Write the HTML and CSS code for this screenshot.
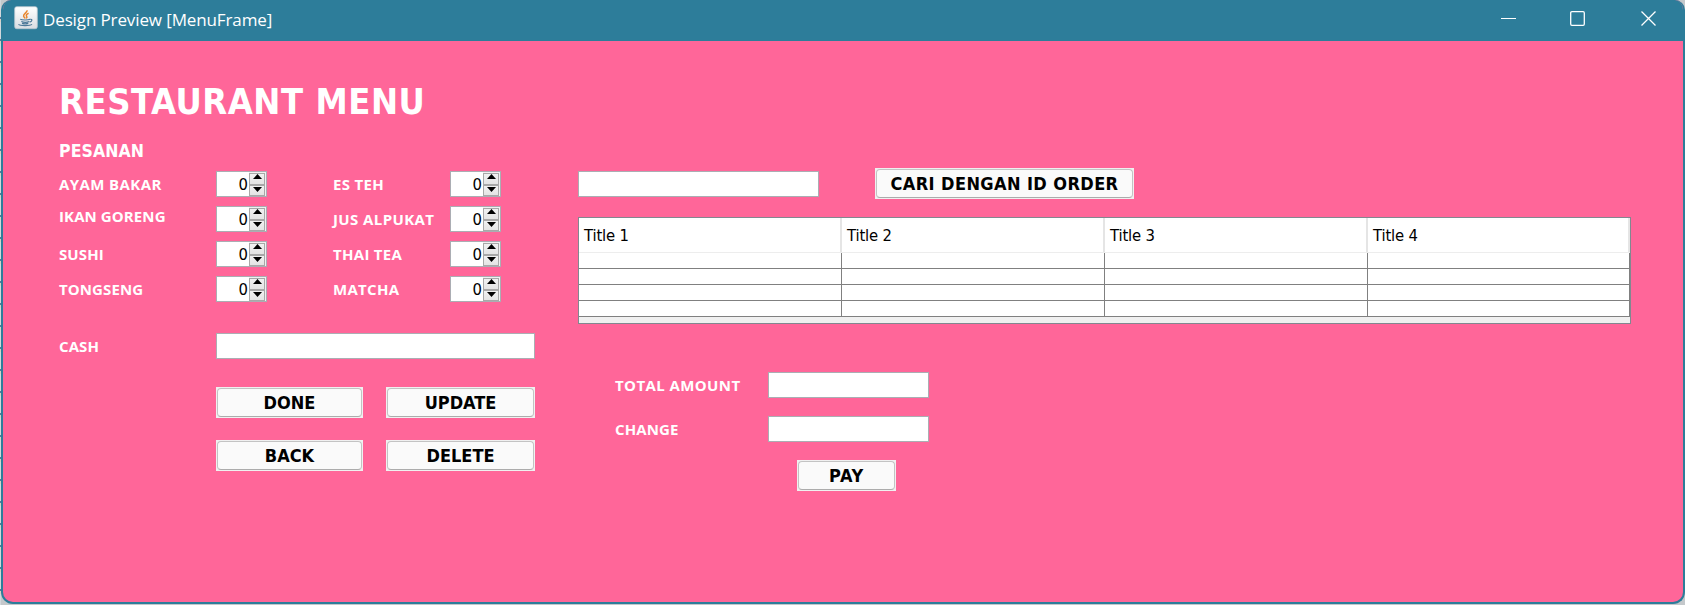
FILE: index.html
```html
<!DOCTYPE html>
<html lang="id">
<head>
<meta charset="utf-8">
<title>Design Preview [MenuFrame]</title>
<link rel="stylesheet" href="styles.css">
</head>
<body>
<div class="window">
  <header class="titlebar">
    <svg class="app-icon" width="24" height="24" viewBox="0 0 24 24">
      <defs><linearGradient id="tile" x1="0" y1="0" x2="0" y2="1"><stop offset="0" stop-color="#fff"/><stop offset="1" stop-color="#d9dde2"/></linearGradient></defs>
      <rect x=".7" y=".7" width="22.6" height="22" rx="2" fill="url(#tile)" stroke="#b9c6d0" stroke-width=".8"/>
      <path d="M13 4.3c.7 2.2-3.9 3.5-3.4 5.8.2 1 1.300 1.600 1.600 2.500M14.600 7.300c-2.300 1-2.700 2-1.900 3.200.5.8.100 1.500-.5 1.900" fill="none" stroke="#e8862e" stroke-width="1.500"/>
      <path d="M6.300 13.300c1.500.9 8 .9 9.800 0M7.300 15.500c2 .8 6 .8 8 0M8 17.400c1.800.6 4.500.6 6.300 0M16.300 13.300c2.200-.5 2.200 2.200-.6 2.900M4.500 18.400c1.500 1.600 11.500 1.600 13.500 0" fill="none" stroke="#4c7898" stroke-width="1.200"/>
    </svg>
    <span class="caption">Design Preview [MenuFrame]</span>
    <svg class="controls" width="156" height="16" viewBox="0 0 156 16" fill="none" stroke="#fff">
      <path d="M0 8.500h15" stroke-width="1"/>
      <rect x="69.700" y="1.700" width="13.600" height="13.600" rx="1.200" stroke-width="1.300"/>
      <path d="M140.500 1.500l14 14M154.500 1.500l-14 14" stroke-width="1.300"/>
    </svg>
  </header>
  <main class="content">
    <section class="order">
      <h1 class="heading">RESTAURANT MENU</h1>
      <h2 class="subheading">PESANAN</h2>
      <div class="items">
        <label class="label wide">AYAM BAKAR</label><div class="spinner"><span>0</span><i class="arrows"><b class="up"></b><b class="down"></b></i></div>
        <label class="label second semi">ES TEH</label><div class="spinner"><span>0</span><i class="arrows"><b class="up"></b><b class="down"></b></i></div>
        <label class="label raised">IKAN GORENG</label><div class="spinner"><span>0</span><i class="arrows"><b class="up"></b><b class="down"></b></i></div>
        <label class="label second wide">JUS ALPUKAT</label><div class="spinner"><span>0</span><i class="arrows"><b class="up"></b><b class="down"></b></i></div>
        <label class="label">SUSHI</label><div class="spinner"><span>0</span><i class="arrows"><b class="up"></b><b class="down"></b></i></div>
        <label class="label second semi">THAI TEA</label><div class="spinner"><span>0</span><i class="arrows"><b class="up"></b><b class="down"></b></i></div>
        <label class="label">TONGSENG</label><div class="spinner"><span>0</span><i class="arrows"><b class="up"></b><b class="down"></b></i></div>
        <label class="label second semi">MATCHA</label><div class="spinner"><span>0</span><i class="arrows"><b class="up"></b><b class="down"></b></i></div>
      </div>
      <div class="cash"><label class="label">CASH</label><div class="field"></div></div>
      <div class="actions">
        <button class="button">DONE</button><button class="button">UPDATE</button>
        <button class="button">BACK</button><button class="button">DELETE</button>
      </div>
    </section>
    <section class="results">
      <div class="search"><div class="field"></div><button class="button spaced">CARI DENGAN ID ORDER</button></div>
      <div class="table">
        <div class="thead"><span>Title 1</span><span>Title 2</span><span>Title 3</span><span>Title 4</span></div>
        <div class="row"><i></i><i></i><i></i><i></i></div>
        <div class="row"><i></i><i></i><i></i><i></i></div>
        <div class="row"><i></i><i></i><i></i><i></i></div>
        <div class="row"><i></i><i></i><i></i><i></i></div>
      </div>
      <div class="payment">
        <label class="label wide">TOTAL AMOUNT</label><div class="field"></div>
        <label class="label">CHANGE</label><div class="field"></div>
      </div>
      <button class="button pay">PAY</button>
    </section>
  </main>
</div>
</body>
</html>
```
FILE: styles.css
```css
* { box-sizing: border-box; }
body {
  margin: 0;
  height: 605px;
  overflow: hidden;
  background: repeating-linear-gradient(#d3d8dc 0 17px, #56789a 17px 19px, #d8d2c4 19px 22px);
  font-family: "Open Sans", "Noto Sans", sans-serif;
}
.window {
  height: 604px;
  margin-left: 1px;
  border: 2px solid #2d7d9a;
  border-top: 0;
  border-radius: 10px 10px 12px 12px;
  background: #ff6699;
  overflow: hidden;
  box-shadow: 0 0 0 12px #c4c8cb;
  clip-path: inset(0 0 -1px 0);
}
.titlebar {
  display: flex;
  height: 41px;
  padding: 6px 26px 0 11px;
  background: #2d7d9a;
}
.app-icon { flex: none; }
.caption {
  flex: 1;
  margin-left: 5px;
  color: #fff;
  font-size: 17px;
  line-height: 27px;
  letter-spacing: -.12px;
}
.controls { margin-top: 4px; }
.content { display: flex; padding-left: 56px; }
.order { width: 476px; }
.heading {
  margin: 40px 0 0;
  color: #fff;
  font: bold 36px/42px "DejaVu Sans Condensed", sans-serif;
  letter-spacing: .55px;
}
.subheading {
  margin: 18px 0 0;
  color: #fff;
  font: bold 17.5px/20px "DejaVu Sans Condensed", sans-serif;
  letter-spacing: .1px;
}
.items {
  display: grid;
  grid-template-columns: 157px 51px 183px 51px;
  row-gap: 9px;
  margin-top: 10px;
}
.label {
  color: #fff;
  font-size: 15px;
  font-weight: bold;
  line-height: 26px;
  letter-spacing: .1px;
  white-space: nowrap;
}
.second { padding-left: 66px; }
.raised { margin-top: -3px; }
.wide { letter-spacing: .4px; }
.semi { letter-spacing: .3px; }
.spinner {
  display: flex;
  justify-content: flex-end;
  height: 26px;
  border: 1px solid #abadb3;
  background: linear-gradient(90deg, #fff 32px, #f0f0f0 32px);
}
.spinner span {
  font: 16.5px/25px "DejaVu Sans Condensed", sans-serif;
  margin-right: 1px;
}
.arrows {
  display: flex;
  flex-direction: column;
  justify-content: space-between;
  width: 16px;
  height: 23px;
  margin: 1px 1px 0 0;
  padding: 0 3px 3px;
  border: 1px solid #a8a8a8;
  background: linear-gradient(#f1f1f1 0, #e4e4e4 10px, #a8a8a8 10px 12px, #f1f1f1 12px, #e4e4e4);
}
.up, .down { width: 9px; height: 5px; background: #000; }
.up { clip-path: polygon(50% 0, 100% 100%, 0 100%); }
.down { clip-path: polygon(0 0, 100% 0, 50% 100%); }
.field { height: 26px; border: 1px solid #abadb3; background: #fff; }
.cash { display: grid; grid-template-columns: 157px 319px; margin-top: 31px; }
.actions {
  display: grid;
  grid-template-columns: 147px 149px;
  gap: 22px 23px;
  margin: 28px 0 0 157px;
}
.button {
  position: relative;
  z-index: 0;
  height: 31px;
  padding: 0;
  border: 0;
  background: #f0f0f0;
  color: #000;
  font: bold 18px/31px "DejaVu Sans Condensed", sans-serif;
}
.button::before {
  content: "";
  position: absolute;
  z-index: -1;
  inset: 1px;
  border: 1px solid #c3c3c3;
  border-bottom-color: #acacac;
  border-radius: 4px;
  background: #fafafa;
}
.results { width: 1053px; margin-left: 43px; padding-top: 127px; }
.search { display: flex; align-items: flex-start; }
.search .field { width: 241px; margin-top: 3px; }
.search .button { width: 259px; margin-left: 56px; }
.search .spaced { letter-spacing: .4px; }
.table {
  height: 107px;
  margin-top: 18px;
  border: 1px solid #828790;
  background: #f0f0f0;
}
.thead, .row { display: grid; grid-template-columns: 263px 263px 263px 262px; }
.thead {
  height: 35px;
  border-bottom: 1px solid #ededed;
  background: #fff;
}
.thead span {
  padding-left: 5px;
  border-right: 2px solid #e5e5e5;
  font: 16.5px/36px "DejaVu Sans Condensed", sans-serif;
  letter-spacing: -.15px;
  height: 34px;
}
.row { height: 16px; }
.row i {
  border-right: 1px solid #808080;
  border-bottom: 1px solid #808080;
  background: #fff;
}
.payment {
  display: grid;
  grid-template-columns: 153px 161px;
  row-gap: 18px;
  margin: 48px 0 0 37px;
}
.pay { display: block; width: 99px; margin: 18px 0 0 219px; letter-spacing: .8px; }
```
